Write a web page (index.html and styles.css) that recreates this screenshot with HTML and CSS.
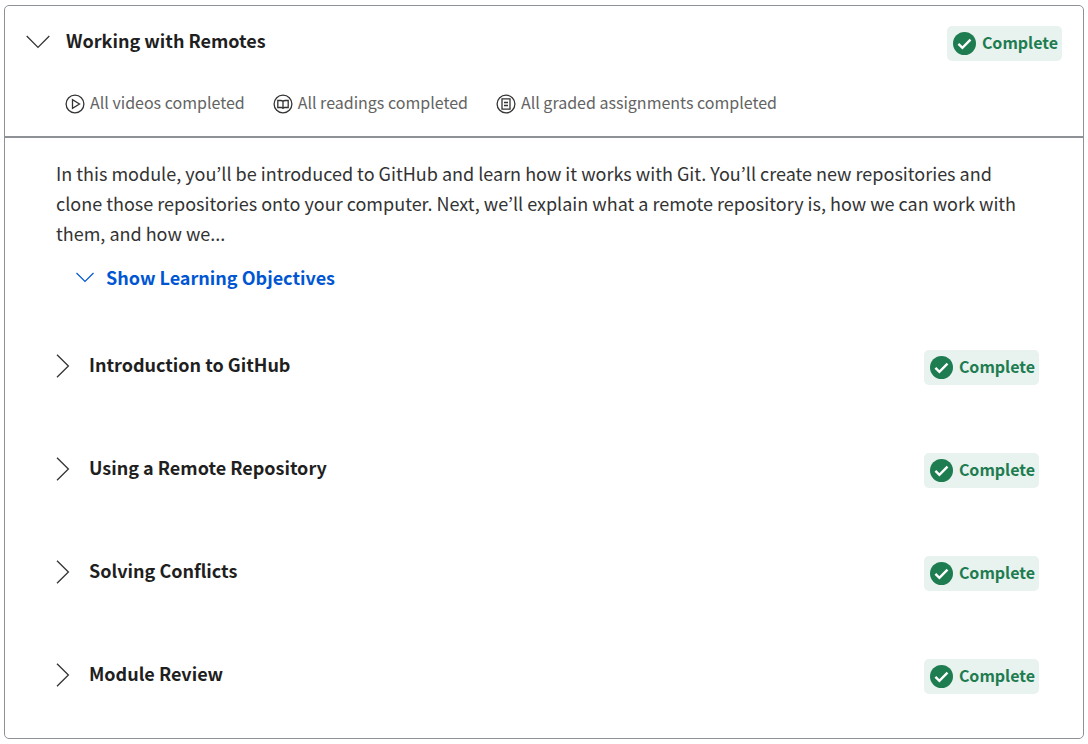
FILE: index.html
```html
<!DOCTYPE html>
<html lang="en">
<head>
<meta charset="utf-8">
<meta name="viewport" content="width=device-width, initial-scale=1">
<title>Working with Remotes</title>
<link rel="stylesheet" href="styles.css">
</head>
<body>
<svg class="sprite" aria-hidden="true">
  <symbol id="check" viewBox="0 0 23 23"><circle cx="11.5" cy="11.5" r="11.5" fill="#1d7c50"/><path d="M5.400 11.900l4 4 8.100-8.200" fill="none" stroke="#fff" stroke-width="2.400"/></symbol>
  <symbol id="chevron-right" viewBox="0 0 14 24"><path d="M1 .7L12.400 12 1 23.300" fill="none" stroke="currentColor" stroke-width="1.300"/></symbol>
</svg>
<main class="module">
  <header class="module-header">
    <div class="module-top">
      <h2 class="heading">
        <button class="toggle toggle-module" type="button" aria-expanded="true">
          <svg class="chevron-down" viewBox="0 0 24 14" aria-hidden="true"><path d="M.7 1L12 12.400 23.300 1" fill="none" stroke="currentColor" stroke-width="1.300"/></svg>
          <span class="label">Working with Remotes</span>
        </button>
      </h2>
      <span class="badge"><svg class="badge-icon" aria-hidden="true"><use href="#check"/></svg><span class="label">Complete</span></span>
    </div>
    <ul class="progress">
      <li class="progress-item">
        <svg class="progress-icon" viewBox="0 0 20 20" aria-hidden="true"><circle cx="10" cy="10" r="8.900"/><path d="M7.500 5.600v8.800l7-4.400z"/></svg>
        <span class="label">All videos completed</span>
      </li>
      <li class="progress-item">
        <svg class="progress-icon" viewBox="0 0 20 20" aria-hidden="true"><circle cx="10" cy="10" r="8.900"/><path d="M10 7.200C9.400 6.600 8.600 6.500 7.600 6.500H4.800v7H8.400Q9.500 13.500 10 14.200Q10.500 13.500 11.600 13.500H15.200v-7H12.400C11.400 6.500 10.600 6.600 10 7.200zV15"/></svg>
        <span class="label">All readings completed</span>
      </li>
      <li class="progress-item">
        <svg class="progress-icon" viewBox="0 0 20 20" aria-hidden="true"><circle cx="10" cy="10" r="8.900"/><path d="M6 4.800h8v10.400H6zM8 8.500h4M8 11.500h4"/></svg>
        <span class="label">All graded assignments completed</span>
      </li>
    </ul>
  </header>
  <div class="module-body">
    <p class="description">In this module, you’ll be introduced to GitHub and learn how it works with Git. You’ll create new repositories and clone those repositories onto your computer. Next, we’ll explain what a remote repository is, how we can work with them, and how we...</p>
    <button class="objectives" type="button" aria-expanded="false">
      <svg class="objectives-icon" viewBox="0 0 18 11" aria-hidden="true"><path d="M.5 1L9 9.500 17.500 1" fill="none" stroke="currentColor" stroke-width="1.200"/></svg>
      <span>Show Learning Objectives</span>
    </button>
    <ul class="lessons">
      <li class="lesson">
        <h3 class="heading"><button class="toggle" type="button" aria-expanded="false"><svg class="chevron-right" aria-hidden="true"><use href="#chevron-right"/></svg><span class="label">Introduction to GitHub</span></button></h3>
        <span class="badge"><svg class="badge-icon" aria-hidden="true"><use href="#check"/></svg><span class="label">Complete</span></span>
      </li>
      <li class="lesson">
        <h3 class="heading"><button class="toggle" type="button" aria-expanded="false"><svg class="chevron-right" aria-hidden="true"><use href="#chevron-right"/></svg><span class="label">Using a Remote Repository</span></button></h3>
        <span class="badge"><svg class="badge-icon" aria-hidden="true"><use href="#check"/></svg><span class="label">Complete</span></span>
      </li>
      <li class="lesson">
        <h3 class="heading"><button class="toggle" type="button" aria-expanded="false"><svg class="chevron-right" aria-hidden="true"><use href="#chevron-right"/></svg><span class="label">Solving Conflicts</span></button></h3>
        <span class="badge"><svg class="badge-icon" aria-hidden="true"><use href="#check"/></svg><span class="label">Complete</span></span>
      </li>
      <li class="lesson">
        <h3 class="heading"><button class="toggle" type="button" aria-expanded="false"><svg class="chevron-right" aria-hidden="true"><use href="#chevron-right"/></svg><span class="label">Module Review</span></button></h3>
        <span class="badge"><svg class="badge-icon" aria-hidden="true"><use href="#check"/></svg><span class="label">Complete</span></span>
      </li>
    </ul>
  </div>
</main>
</body>
</html>
```

FILE: styles.css
```css
* {
  box-sizing: border-box;
}

body {
  margin: 5px 4px;
  background: #fff;
  color: #1f1f1f;
  font-family: "Noto Sans CJK KR", "Noto Sans", sans-serif;
  font-size: 18px;
  line-height: 30px;
}

ul,
p,
.heading {
  margin: 0;
  padding: 0;
  list-style: none;
}

button {
  border: 0;
  padding: 0;
  background: none;
  color: inherit;
  font: inherit;
  text-align: left;
  cursor: pointer;
}

.sprite {
  display: none;
}

.module {
  border: 1px solid #8e9297;
  border-radius: 5px;
}

.module-header {
  padding: 20px 21px 17px;
  border-bottom: 2px solid #8e9297;
}

.module-top,
.lesson {
  display: flex;
  justify-content: space-between;
  align-items: flex-start;
  gap: 16px;
}

.heading {
  font-size: 18px;
  font-weight: 700;
}

.toggle {
  display: flex;
  align-items: center;
  gap: 19px;
}

.toggle-module {
  gap: 16px;
}

.label {
  padding-bottom: 3px;
  line-height: 28px;
}

.chevron-down,
.chevron-right {
  flex: none;
  color: #333;
}

.chevron-down {
  width: 24px;
  height: 14px;
}

.chevron-right {
  width: 14px;
  height: 24px;
}

.badge {
  display: flex;
  flex: none;
  align-items: center;
  gap: 6px;
  height: 35px;
  padding: 0 4px 0 6px;
  border-radius: 5px;
  background: #e8f2ee;
  color: #1d7c50;
  font-size: 16px;
  font-weight: 700;
}

.badge-icon {
  width: 23px;
  height: 23px;
}

.progress {
  display: flex;
  flex-wrap: wrap;
  gap: 8px 28px;
  margin-top: 27px;
  padding-left: 39px;
  color: #636363;
  font-size: 16px;
}

.progress-item {
  display: flex;
  align-items: center;
  gap: 5px;
}

.progress-icon {
  width: 20px;
  height: 20px;
  fill: none;
  stroke: #333;
  stroke-width: 1.3;
}

.module-body {
  padding: 20px 44px 44px 51px;
}

.description {
  color: #333;
}

.objectives {
  display: flex;
  align-items: center;
  gap: 12px;
  margin: 14px 0 0 20px;
  color: #0056d2;
  font-weight: 700;
}

.objectives-icon {
  width: 18px;
  height: 11px;
}

.lessons {
  display: grid;
  gap: 68px;
  margin-top: 58px;
}
```
